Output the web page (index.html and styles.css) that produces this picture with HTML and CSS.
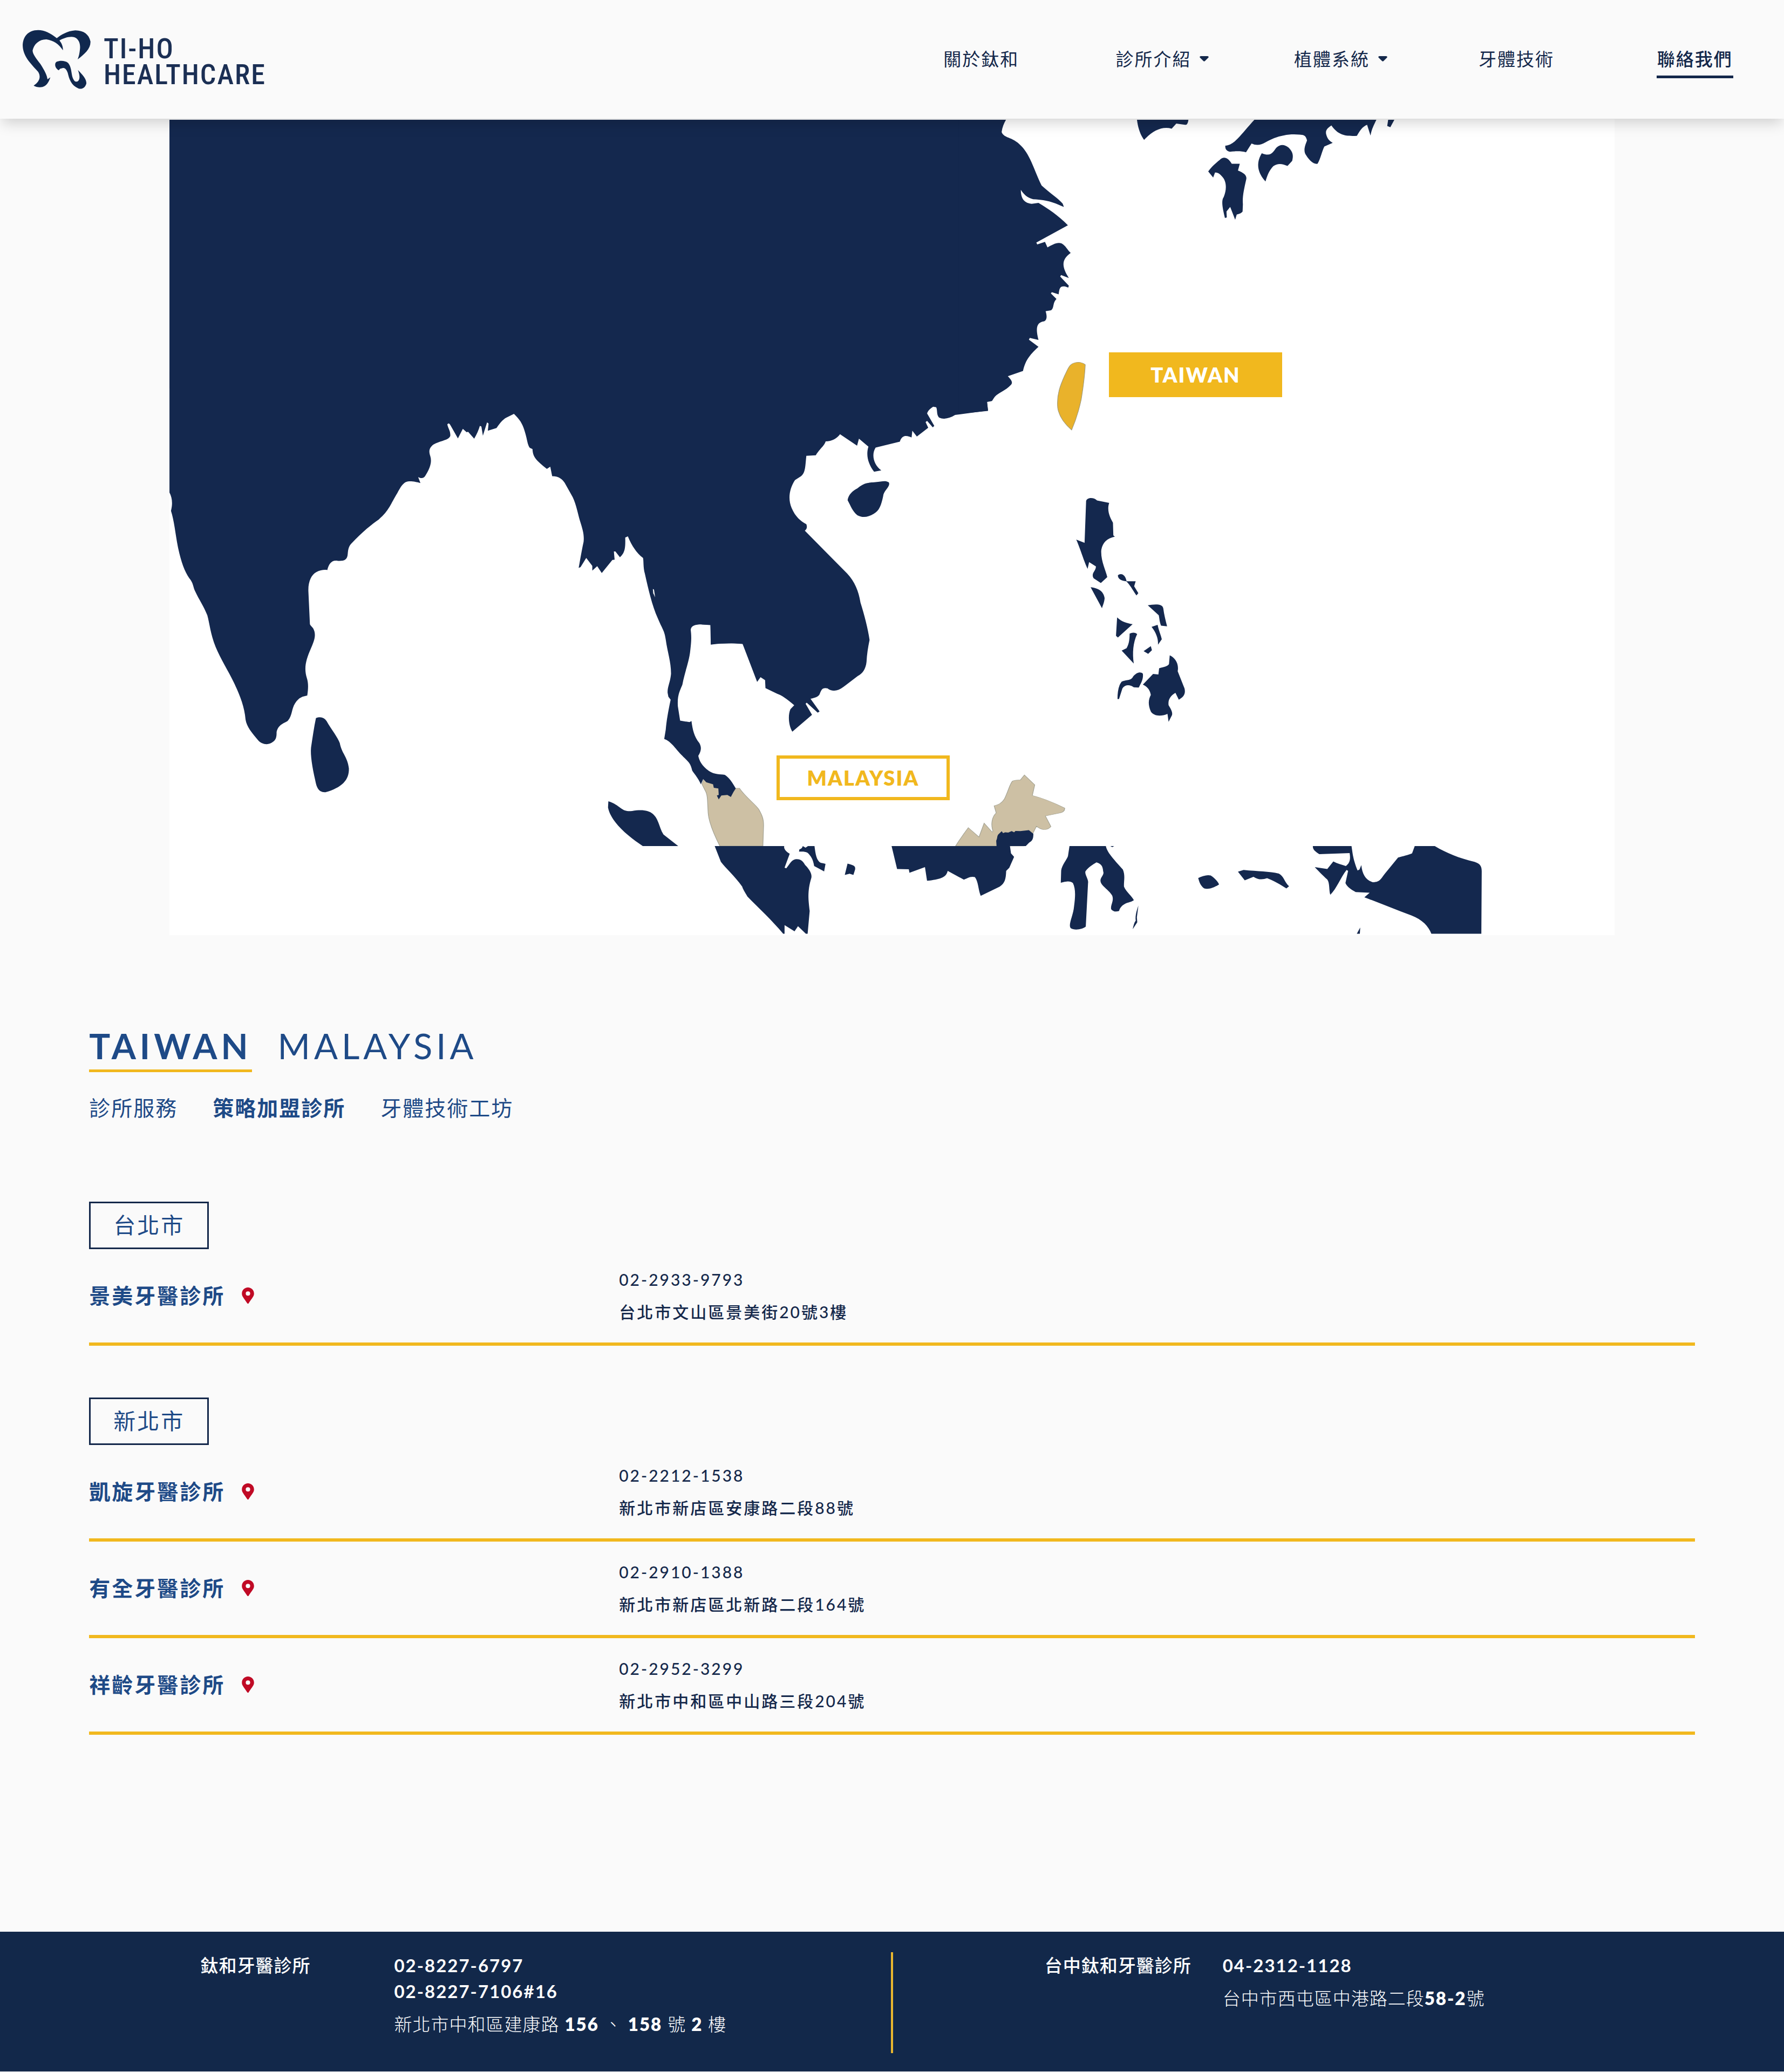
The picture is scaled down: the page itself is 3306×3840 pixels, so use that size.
FILE: index.html
```html
<!DOCTYPE html>
<html lang="zh-Hant">
<head>
<meta charset="utf-8">
<meta name="viewport" content="width=device-width, initial-scale=1">
<title>聯絡我們 | TI-HO HEALTHCARE</title>
<link rel="stylesheet" href="styles.css">
</head>
<body>
<header class="header">
  <a class="logo" href="#">
    <svg class="logo-mark" viewBox="42 55 126 110" aria-hidden="true">
      <g transform="scale(.3827 .3333)">
        <path d="M275 212C245 185 215 167 185 167C135 167 110 205 110 255C112 320 160 365 185 400C200 430 190 455 163 476Q180 488 205 484C225 478 235 460 244 430L230 441C228 420 215 390 195 355C175 325 157 300 158 280C165 245 190 218 225 219C260 225 285 245 305 280C305 255 298 240 288 225C310 210 340 200 360 207C385 218 390 250 387 275C385 295 383 310 376 330C410 300 440 270 438 230C430 190 405 170 365 169C325 172 295 195 275 212Z"/>
        <path d="M285 391C265 380 262 350 275 343C290 336 315 336 330 350C345 370 345 400 350 425C357 450 365 457 375 453C388 445 388 420 377 389C400 415 420 440 418 465C412 490 395 498 380 492C345 475 335 440 328 405C320 380 310 375 298 380C288 382 288 386 285 391Z"/>
      </g>
    </svg>
    <span class="logo-text"><span>TI-HO</span><span>HEALTHCARE</span></span>
  </a>
  <nav class="nav">
    <a class="nav-link" href="#">關於鈦和</a>
    <a class="nav-link has-menu" href="#">診所介紹<svg class="caret" viewBox="0 0 17 10" aria-hidden="true"><path d="M2 0H15Q18 1 16 3L10 9Q8.500 10.500 7 9L1 3Q-1 1 2 0Z"/></svg></a>
    <a class="nav-link has-menu" href="#">植體系統<svg class="caret" viewBox="0 0 17 10" aria-hidden="true"><path d="M2 0H15Q18 1 16 3L10 9Q8.500 10.500 7 9L1 3Q-1 1 2 0Z"/></svg></a>
    <a class="nav-link" href="#">牙體技術</a>
    <a class="nav-link active" href="#" aria-current="page">聯絡我們</a>
  </nav>
</header>

<main>
  <section class="map">
    <svg class="map-art" viewBox="314 221 2678 1512" role="img" aria-label="亞洲據點地圖">
      <g class="malaysia" transform="translate(1100 1360) scale(.63776 .33333)">
        <path d="M315 280L320 252L414 303L424 303C440 350 470 390 480 420C492 460 494 480 494 510L492 624L367 624C350 560 335 490 333 440C331 380 332 340 325 318Z"/>
        <path d="M1052 624C1065 585 1078 550 1089 522L1120 574L1135 497L1158 546C1162 545 1160 535 1159 530C1155 500 1158 460 1170 440L1164 400C1180 395 1188 380 1194 362C1205 320 1210 275 1218 262C1228 255 1235 258 1240 257L1252 229L1282 284L1275 343C1310 360 1345 390 1369 413C1370 430 1362 438 1355 440L1313 457L1329 516C1320 535 1305 542 1287 514L1276 556L1250 624Z"/>
      </g>
      <g class="land">
        <path d="M314 222H1800V720H314Z"/>
        <g transform="translate(300 700) scale(.70153 .54847)">
          <path d="M20 -20L20 388C27 405 29 425 24 450C32 480 36 530 42 570C50 620 60 655 72 677C84 695 82 708 88 722C98 750 110 770 120 803C126 830 128 865 142 910C155 950 175 990 190 1030C205 1070 218 1110 221 1155C224 1180 238 1200 254 1225C264 1240 282 1243 293 1231C303 1222 303 1210 303 1197C308 1170 325 1168 333 1159C345 1140 342 1120 352 1100C362 1080 372 1077 384 1074C387 1050 387 1030 383 1015C374 980 382 950 392 920C402 890 409 870 400 848C396 840 392 838 391 832L387 722C386 690 395 665 408 657C418 650 430 648 437 650C441 630 448 615 465 619C480 620 490 617 491 595C492 578 494 570 500 561C530 520 555 495 573 479C600 450 605 425 622 390C635 358 642 350 655 350C668 350 676 354 683 356L677 336C690 344 694 336 698 327C708 305 714 285 709 265C705 250 705 238 717 226C735 212 760 212 762 195C762 178 757 175 754 158Q758 150 762 160L782 205L795 173L805 184L809 183L825 206Q835 185 840 163L844 165L848 196L859 151L863 155L861 179L884 170C895 150 903 138 915 132L930 122C945 140 952 155 957 175C966 210 965 225 972 237L979 241C980 270 990 280 1017 308L1026 301L1031 333C1050 333 1058 345 1064 355L1085 403C1095 430 1099 460 1104 482C1112 515 1116 530 1114 555C1108 590 1105 615 1101 643L1106 640L1121 609L1137 636L1137 652L1150 637L1162 660L1190 616L1196 615L1194 587L1198 587L1210 607C1222 592 1225 580 1224 540L1231 536C1240 565 1255 595 1271 609C1273 620 1271 640 1276 663C1285 715 1295 770 1310 813C1322 850 1328 855 1331 885C1336 930 1345 960 1345 1000C1343 1030 1335 1045 1336 1065L1338 1078L1344 1088C1337 1130 1333 1160 1331 1190L1327 1221C1345 1228 1360 1260 1375 1278C1390 1298 1396 1300 1401 1328C1410 1345 1415 1350 1424 1374L1430 1356L1438 1367L1456 1374L1458 1386L1470 1388L1471 1410L1466 1412L1471 1425L1478 1412L1494 1410L1503 1417L1510 1400L1516 1388C1508 1370 1498 1350 1487 1342C1475 1340 1460 1342 1445 1329C1425 1310 1420 1295 1417 1278C1425 1260 1426 1250 1420 1235C1406 1212 1402 1190 1399 1160L1394 1164L1369 1159L1363 1110C1361 1070 1370 1055 1375 1037C1382 990 1393 960 1396 920C1400 880 1398 865 1397 852C1398 838 1410 834 1425 834L1449 836L1450 902C1480 897 1510 897 1534 899L1568 1010L1600 1010L1600 -20Z"/>
          <path d="M407 1150Q425 1142 435 1160C448 1190 465 1215 470 1235C475 1270 490 1280 494 1320C495 1360 475 1385 432 1401C412 1402 408 1380 405 1360C397 1315 392 1275 394 1250C398 1215 402 1180 407 1150Z"/>
          <path class="lake" d="M1297 714L1300 716L1303 742L1298 728Z"/>
        </g>
        <g transform="translate(1300 700) scale(.70153 .54847)">
          <path d="M819 15C812 35 795 45 785 53C775 60 772 70 767 79L754 82L757 111L670 126C655 138 640 142 628 135C620 125 624 110 620 100L612 98C603 105 598 112 596 121L615 163L611 168L596 146L592 150L599 169L569 199L557 179L555 202C545 196 530 190 524 216L460 236C448 260 455 295 475 313L456 318C440 290 434 262 441 233L416 206L411 230L366 191C358 205 345 215 328 215C325 230 312 240 302 262L277 264C274 300 275 320 263 333L247 346C232 375 228 410 238 440C248 470 262 485 277 495C280 505 278 512 273 517L385 662C405 690 415 720 420 760C430 800 440 850 444 886C440 910 437 935 436 960C434 985 425 1000 413 1008L375 1045C360 1060 345 1062 333 1050C318 1045 316 1058 312 1070C308 1080 298 1082 288 1085L312 1128L307 1132L278 1098L275 1102L292 1139L240 1196C230 1175 228 1140 235 1120L245 1107C225 1085 212 1073 200 1068L169 1049L168 1022L156 1012L147 1028L109 900C80 896 50 897 25 901L24 835L0 834L0 -100L700 -100Z"/>
          <path d="M386 414C388 395 400 382 412 374C430 355 440 355 460 353C475 352 485 346 495 354C500 368 482 380 480 400C475 430 470 450 455 460C440 472 425 474 412 465C398 450 395 435 386 414Z"/>
          <path d="M1016 420C1015 405 1035 402 1045 415L1077 423C1070 450 1080 475 1087 490L1088 533L1092 537C1070 543 1058 560 1056 585C1055 620 1068 650 1072 674L1055 694L1036 678C1028 660 1042 655 1042 638L1024 623L1020 646C1010 620 1000 575 990 547L1012 558Z"/>
          <path d="M1028 708C1050 712 1062 722 1065 745C1064 760 1060 770 1058 779Z"/>
          <path d="M1100 668C1108 658 1120 665 1123 688L1147 688L1143 705L1154 728L1149 736C1138 715 1132 700 1122 688C1108 686 1100 680 1100 668Z"/>
          <path d="M1179 769C1195 766 1218 762 1220 780C1222 800 1226 820 1230 840L1214 838C1210 825 1210 815 1208 803Z"/>
          <path d="M1098 810C1110 825 1125 830 1139 833L1100 878L1095 872Z"/>
          <path d="M1189 842L1205 835C1208 855 1214 870 1216 884L1206 902C1207 880 1200 860 1189 842Z"/>
          <path d="M1131 865Q1142 858 1151 866C1140 895 1138 930 1142 966L1110 922L1123 914C1130 900 1131 880 1131 865Z"/>
          <path d="M1168 924L1187 907L1190 921L1180 933Z"/>
          <path d="M1140 1010C1150 995 1160 993 1166 1000C1168 1020 1160 1035 1155 1047L1142 1046C1130 1036 1118 1038 1112 1050L1103 1086L1099 1086C1099 1060 1102 1040 1110 1027C1120 1020 1135 1025 1140 1010Z"/>
          <path d="M1237 938C1250 945 1262 965 1258 992L1276 1050C1280 1070 1272 1080 1261 1088L1252 1065C1238 1075 1232 1090 1234 1107C1240 1120 1245 1130 1243 1140L1234 1163L1231 1136C1215 1145 1195 1145 1187 1128C1178 1100 1182 1085 1187 1072C1185 1055 1178 1045 1166 1037L1193 1001L1207 1003L1209 982C1222 978 1232 975 1235 968Z"/>
        </g>
        <g transform="translate(1800 200) scale(.57398 .44643)">
          <path d="M112 49C105 65 100 80 98 100C105 125 130 120 155 150C190 190 200 250 227 322C250 350 280 375 295 397L299 411C270 395 250 382 200 379C180 372 170 360 160 340C160 365 165 395 195 398L217 394C250 420 280 445 312 487L210 559L213 567L238 556L246 579C262 568 278 555 292 563C305 572 310 590 321 602C290 630 292 660 315 706L290 694L287 700L315 738L313 746L305 742C285 737 285 750 282 774L260 765L257 770L275 793C262 810 268 830 258 840L240 844C244 860 246 880 235 886C215 890 205 905 217 963L189 955L186 962L217 992C185 1030 175 1050 167 1092L118 1114C130 1130 135 1140 128 1150C110 1175 90 1180 75 1200L67 1216L51 1219L54 1258L-40 1270L-40 49Z"/>
          <path d="M535 49L701 49C700 60 697 72 690 70L662 65L647 86C615 75 585 95 558 133C545 110 538 80 535 49Z"/>
          <path d="M914 49L1308 49C1300 70 1292 90 1289 115L1278 70C1262 78 1255 95 1245 116C1210 118 1185 115 1163 73C1148 85 1143 95 1146 110C1150 130 1158 138 1167 145L1140 160C1132 180 1128 210 1118 232C1100 235 1085 205 1078 190C1072 170 1080 150 1084 135C1080 115 1075 112 1060 111C1020 105 980 120 950 143C935 155 920 157 905 148L887 184C870 178 850 180 835 182C822 178 820 170 820 157C850 155 870 110 914 49Z"/>
          <path d="M1346 49L1366 49L1353 80L1343 75Z"/>
          <path d="M938 188C970 205 975 180 985 165C998 150 1010 150 1025 165C1040 185 1040 200 1036 220L1021 241C1005 232 990 228 975 242C960 262 955 285 950 305C925 270 918 230 938 188Z"/>
          <path d="M765 264C775 245 790 228 802 216C815 200 828 205 841 232L867 232L861 260C880 270 890 280 888 295C880 340 875 370 877 400L876 430C870 440 862 440 857 443L852 464L836 411L824 430L825 455L819 457C812 420 806 385 815 370C825 340 825 305 810 285C800 270 795 268 787 268L781 289Z"/>
          <path class="taiwan" d="M345 1056Q358 1056 368 1066C366 1120 360 1170 355 1210C345 1270 333 1310 324 1337C300 1310 283 1280 279 1245C275 1190 288 1150 302 1110C315 1075 318 1058 345 1056Z"/>
        </g>
        <g transform="translate(1100 1360) scale(.63776 .33333)">
          <path d="M43 375C60 385 70 400 78 412C90 430 100 432 112 429C140 420 160 425 172 445C190 475 190 520 203 560L246 624L143 624C100 570 50 490 42 410Z"/>
          <path d="M1171 624L1170 595C1174 580 1172 570 1176 560L1186 542L1190 552L1196 548L1205 549L1215 541L1222 548L1226 540L1240 541L1265 536L1278 556C1278 585 1275 595 1266 605L1256 624Z"/>
          <path d="M352 624L554 624C552 640 560 655 570 667L555 744L560 748C570 725 575 700 588 697C605 695 610 715 615 730C628 755 635 780 633 800C620 880 625 930 628 985L622 1112L617 1112L594 1070L584 1098L555 1064L555 1112L551 1112C520 1040 480 970 447 905C440 880 434 865 432 850C410 790 385 750 370 712Z"/>
          <path d="M608 624L616 633L623 624L642 624C645 670 648 705 660 717L674 723L670 765L641 735C638 700 632 680 622 662C612 652 605 656 597 655L598 643Q606 638 608 624Z"/>
          <path d="M738 722C755 730 762 735 760 755L755 785L744 778L730 785Z"/>
          <path d="M866 624L1210 624L1213 665L1222 684L1208 745L1199 762C1198 810 1195 830 1180 850L1125 901C1118 870 1118 820 1108 797C1095 790 1085 805 1076 811L1029 762C1025 800 1005 810 969 817L963 741L918 773L916 753L882 752Z"/>
        </g>
        <g transform="translate(1700 1360) scale(.70153 .33333)">
          <path d="M402 624L498 624C502 665 525 710 543 755C550 790 545 820 546 850C552 880 568 905 572 925C565 940 540 935 533 985Q520 995 512 975C510 950 520 930 515 900C505 865 485 845 484 820C482 800 495 785 491 765C490 735 485 722 473 715C465 725 450 745 444 765C442 785 453 810 451 830L445 1072C435 1088 415 1095 405 1080C398 1060 412 1010 414 960C418 900 418 860 411 830Q402 812 379 828L380 760C382 730 395 700 398 680Z"/>
          <path d="M510 624L520 624L515 630Z"/>
          <path d="M584 955L580 1020L581 1048L569 1086C572 1060 574 1045 577 1040C575 1010 580 980 584 955Z"/>
          <path d="M742 802C755 790 765 783 775 788C785 800 795 825 797 838C780 860 768 865 758 860C748 845 745 825 742 802Z"/>
          <path d="M847 767L862 757C900 765 930 765 955 777C968 790 970 825 982 848L975 860C960 840 940 815 924 803C912 812 900 812 888 795L865 815Z"/>
          <path d="M1045 624L1147 624C1150 660 1150 690 1163 760L1168 755L1173 730C1175 780 1185 815 1203 825C1225 825 1225 800 1240 765L1270 688C1285 680 1295 675 1307 665L1314 624L1367 624C1400 665 1430 690 1472 712C1488 722 1491 740 1491 765L1490 1112L1358 1112C1350 1070 1335 1035 1305 1010C1260 975 1220 940 1181 909L1195 884L1158 880C1145 865 1135 850 1131 830L1138 762L1134 757C1118 800 1108 860 1091 895C1087 870 1090 830 1083 810C1070 785 1058 760 1050 741L1083 752L1099 710C1110 722 1120 728 1132 735C1142 720 1145 700 1142 663L1062 669C1050 655 1044 640 1045 624Z"/>
          <path d="M1161 1112L1170 1077L1169 1112Z"/>
        </g>
      </g>
    </svg>
    <button class="map-button map-button-taiwan" type="button" aria-pressed="true">TAIWAN</button>
    <button class="map-button map-button-malaysia" type="button" aria-pressed="false">MALAYSIA</button>
  </section>

  <section class="locations">
    <div class="countries">
      <a class="country active" href="#">TAIWAN</a>
      <a class="country" href="#">MALAYSIA</a>
    </div>
    <div class="services">
      <a class="service" href="#">診所服務</a>
      <a class="service active" href="#">策略加盟診所</a>
      <a class="service" href="#">牙體技術工坊</a>
    </div>

    <section class="city">
      <h2 class="city-name">台北市</h2>
      <ul class="clinics">
        <li class="clinic">
          <h3 class="clinic-name">景美牙醫診所<a class="pin" href="#" aria-label="地圖"><svg viewBox="0 0 384 512"><path d="M172 502C27 291 0 270 0 192C0 86 86 0 192 0S384 86 384 192C384 270 357 291 212 502C202 515 182 515 172 502ZM192 262A70 70 0 1 0 192 122A70 70 0 0 0 192 262Z"/></svg></a></h3>
          <p class="clinic-info">02-2933-9793<br>台北市文山區景美街20號3樓</p>
        </li>
      </ul>
    </section>

    <section class="city">
      <h2 class="city-name">新北市</h2>
      <ul class="clinics">
        <li class="clinic">
          <h3 class="clinic-name">凱旋牙醫診所<a class="pin" href="#" aria-label="地圖"><svg viewBox="0 0 384 512"><path d="M172 502C27 291 0 270 0 192C0 86 86 0 192 0S384 86 384 192C384 270 357 291 212 502C202 515 182 515 172 502ZM192 262A70 70 0 1 0 192 122A70 70 0 0 0 192 262Z"/></svg></a></h3>
          <p class="clinic-info">02-2212-1538<br>新北市新店區安康路二段88號</p>
        </li>
        <li class="clinic">
          <h3 class="clinic-name">有全牙醫診所<a class="pin" href="#" aria-label="地圖"><svg viewBox="0 0 384 512"><path d="M172 502C27 291 0 270 0 192C0 86 86 0 192 0S384 86 384 192C384 270 357 291 212 502C202 515 182 515 172 502ZM192 262A70 70 0 1 0 192 122A70 70 0 0 0 192 262Z"/></svg></a></h3>
          <p class="clinic-info">02-2910-1388<br>新北市新店區北新路二段164號</p>
        </li>
        <li class="clinic">
          <h3 class="clinic-name">祥齡牙醫診所<a class="pin" href="#" aria-label="地圖"><svg viewBox="0 0 384 512"><path d="M172 502C27 291 0 270 0 192C0 86 86 0 192 0S384 86 384 192C384 270 357 291 212 502C202 515 182 515 172 502ZM192 262A70 70 0 1 0 192 122A70 70 0 0 0 192 262Z"/></svg></a></h3>
          <p class="clinic-info">02-2952-3299<br>新北市中和區中山路三段204號</p>
        </li>
      </ul>
    </section>
  </section>
</main>

<footer class="footer">
  <div class="branch branch-taipei">
    <p class="branch-name">鈦和牙醫診所</p>
    <div>
      <p class="branch-phone">02-8227-6797<br>02-8227-7106#16</p>
      <p class="branch-address">新北市中和區建康路 <b>156</b> 、 <b>158</b> 號 <b>2</b> 樓</p>
    </div>
  </div>
  <div class="divider"></div>
  <div class="branch branch-taichung">
    <p class="branch-name">台中鈦和牙醫診所</p>
    <div>
      <p class="branch-phone">04-2312-1128</p>
      <p class="branch-address">台中市西屯區中港路二段<b>58-2</b>號</p>
    </div>
  </div>
</footer>
</body>
</html>
```
FILE: styles.css
```css
* {
  box-sizing: border-box;
}

body,
h2,
h3,
p,
ul {
  margin: 0;
  padding: 0;
}

body {
  background: #fafafa;
  color: #14284b;
  font-family: Lato, "Noto Sans CJK TC", sans-serif;
}

a {
  color: inherit;
  text-decoration: none;
}

/* Header */
.header {
  position: relative;
  z-index: 1;
  display: flex;
  align-items: center;
  justify-content: space-between;
  height: 220px;
  background: #fafafa;
  box-shadow: 0 12px 24px -4px rgba(0, 0, 0, 0.17);
}

.logo {
  display: flex;
  align-items: center;
  gap: 24px;
  padding-left: 42px;
}

.logo-mark {
  width: 126px;
  height: 110px;
  fill: #10284e;
}

.logo-text {
  display: flex;
  flex-direction: column;
  padding-top: 10px;
  font: 500 52px/48px "Liberation Sans Narrow", "Roboto Condensed", Lato, sans-serif;
  letter-spacing: 2px;
  color: #1b2f54;
}

.nav {
  display: grid;
  grid-template-columns: repeat(5, 1fr);
  justify-items: center;
  width: 50%;
}

.nav-link {
  display: flex;
  align-items: center;
  padding: 9px 0 7px;
  border-bottom: 5px solid transparent;
  font-size: 33px;
  line-height: 48px;
  letter-spacing: 2px;
  font-weight: 400;
}

.nav-link.active {
  padding-right: 1px;
  padding-left: 1px;
  border-color: #14284b;
  font-weight: 500;
}

.has-menu {
  padding-left: 10px;
}

.caret {
  width: 17px;
  height: 10px;
  margin-left: 16px;
  fill: #14284b;
}

/* Map */
.map {
  position: relative;
  width: 81%;
  margin: 1px auto 0;
  background: #fff;
}

.map-art {
  display: block;
  width: 100%;
}

.land {
  fill: #14284e;
}

.malaysia {
  fill: #cdc0a4;
  stroke: #a3a293;
  stroke-width: 2px;
}

.taiwan {
  fill: #e9b22b;
  stroke: #a19a78;
  stroke-width: 2px;
}

.lake {
  fill: #fff;
}

.map-button {
  position: absolute;
  width: 12%;
  height: 83px;
  padding: 0 0 2px;
  border: 6px solid #f1b81e;
  border-radius: 0;
  font: 800 38px/46px Lato, sans-serif;
  letter-spacing: 2px;
}

.map-button-taiwan {
  top: 28.6%;
  left: 65%;
  background: #f1b81e;
  color: #fff;
}

.map-button-malaysia {
  top: 78%;
  left: 42%;
  background: #fff;
  color: #f1b81e;
}

/* Locations */
.locations {
  padding: 166px 5% 365px;
  color: #1e4a87;
}

.countries {
  display: flex;
  gap: 48px;
}

.country {
  padding-bottom: 5px;
  border-bottom: 5px solid transparent;
  font-size: 65px;
  line-height: 78px;
  letter-spacing: 7px;
}

.country.active {
  border-color: #f1b81e;
  font-weight: 700;
}

.services {
  display: flex;
  gap: 65px;
  margin: 36px 0 144px;
  font-size: 39px;
  line-height: 60px;
  letter-spacing: 2px;
}

.service.active {
  font-weight: 700;
}

.city + .city {
  margin-top: 96px;
}

.city-name {
  width: fit-content;
  padding: 11px 42px;
  border: 3px solid #14284b;
  font-size: 41px;
  line-height: 60px;
  letter-spacing: 3px;
  font-weight: 400;
}

.clinics {
  list-style: none;
}

.clinic {
  display: grid;
  grid-template-columns: 33% 1fr;
  align-items: center;
  padding: 26px 0 27px;
  border-bottom: 6px solid #f1b81e;
}

.clinic-name {
  display: flex;
  align-items: center;
  gap: 31px;
  font-size: 39px;
  line-height: 60px;
  letter-spacing: 3px;
}

.pin {
  display: block;
  width: 23px;
  height: 30px;
  fill: #c00a25;
}

.pin svg {
  display: block;
  width: 100%;
  height: 100%;
}

.clinic-info {
  color: #14284b;
  font-size: 30px;
  line-height: 60px;
  letter-spacing: 3px;
  font-weight: 500;
}

/* Footer */
.footer {
  display: grid;
  grid-template-columns: 1fr 4px 1fr;
  padding: 38px 0 34px;
  background: #12284a;
  color: #fff;
  font-size: 33px;
  line-height: 48px;
}

.divider {
  background: #e9b62f;
}

.branch {
  display: grid;
  padding-bottom: 30px;
}

.branch-taipei {
  grid-template-columns: 359px 1fr;
  padding-left: 22.5%;
}

.branch-taichung {
  grid-template-columns: 330px 1fr;
  padding-left: 17%;
}

.branch-name {
  letter-spacing: 1px;
  font-weight: 500;
}

.branch-phone {
  letter-spacing: 2px;
  font-weight: 700;
}

.branch-address {
  margin-top: 13px;
  letter-spacing: 1px;
  font-weight: 300;
}

.branch-address b {
  letter-spacing: 2px;
  font-weight: 800;
}
```
